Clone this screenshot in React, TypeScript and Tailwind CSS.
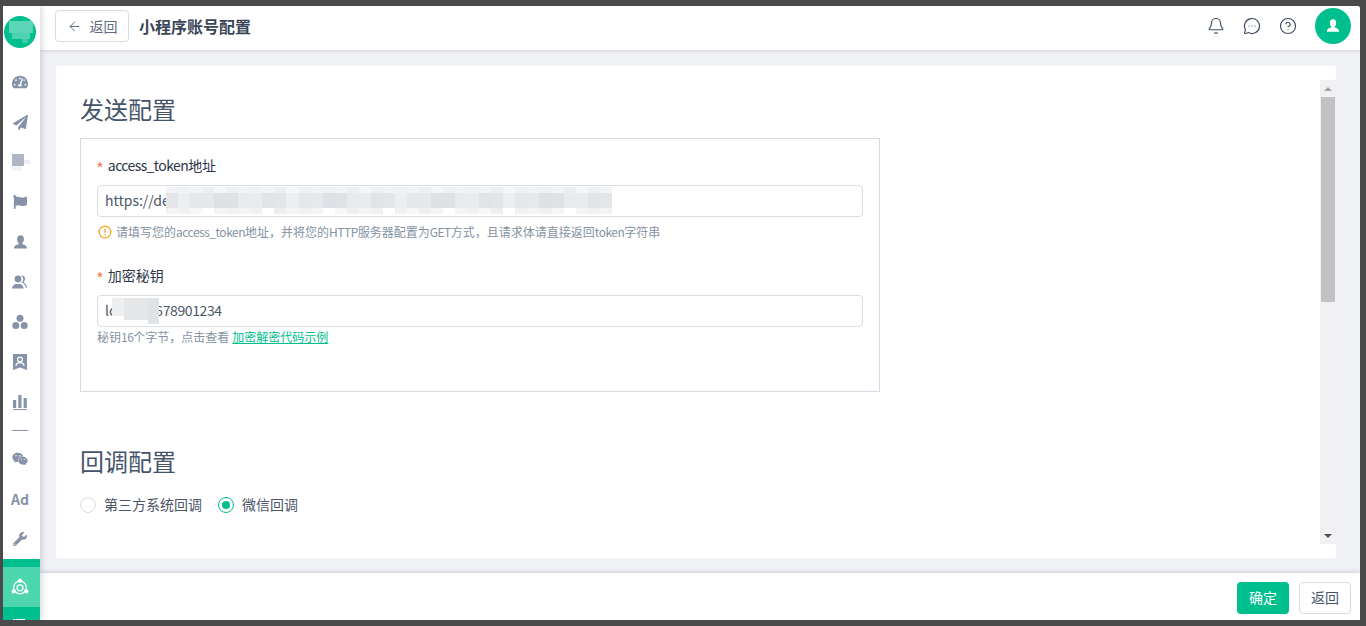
import { ArrowLeft, Bell, CircleHelp, MessageCircleMore } from 'lucide-react';
import { FaFlag, FaPaperPlane, FaTachometerAlt, FaWeixin, FaWrench } from 'react-icons/fa';

const midShades = ['#e3e5e8', '#e9ebed', '#dfe2e5', '#e6e8eb', '#eceeef', '#e1e4e7', '#e8eaec', '#dde0e4', '#e5e7ea'];
const edgeShades = ['#f2f3f4', '#eff0f2', '#f5f6f7', '#edeef0', '#f3f4f5', '#f0f1f3'];
const cells = Array.from({ length: 37 }, (_, i) => i);

function NavRow({ children }: { children: React.ReactNode }) {
  return <div className="flex h-10 items-center justify-center pr-[3px] text-[#8592a8]">{children}</div>;
}

function UserIcon({ size = 16 }: { size?: number }) {
  return (
    <svg width={size} height={size} viewBox="0 0 16 16" fill="currentColor">
      <ellipse cx="8" cy="4.500" rx="3.600" ry="4.300" />
      <path d="M6 8h4v1.800c2.500.8 5 1.500 5 4.700H1c0-3.200 2.500-3.900 5-4.700z" />
    </svg>
  );
}

function UsersIcon() {
  return (
    <svg width="16" height="16" viewBox="0 0 16 16" fill="currentColor">
      <circle cx="6" cy="5" r="3.400" />
      <path d="M0 14.500c0-3 2-4 4-4.600h4c2 .6 3.500 1.600 3.500 4.600z" />
      <path d="M9 1.600c2-.6 4 .8 4 3 0 1.600-.7 2.800-1.600 3.600 1.600.8 3 2.400 3.600 5.600l-1 .5c-.5-3-2-5-4.400-5.800 1-1 1.600-2 1.600-3.500 0-1.200-.8-2.500-2.200-3.400z" />
    </svg>
  );
}

function ClusterIcon() {
  return (
    <svg width="16" height="16" viewBox="0 0 16 16" fill="currentColor">
      <circle cx="8" cy="4.200" r="3.500" />
      <circle cx="3.800" cy="11.400" r="3.500" />
      <circle cx="12.200" cy="11.400" r="3.500" />
    </svg>
  );
}

function BadgeIcon() {
  return (
    <svg width="14" height="16" viewBox="0 0 14 16">
      <path d="M0 0h14v16l-7-2.500L0 16z" fill="currentColor" />
      <circle cx="7" cy="5.500" r="2.400" fill="none" stroke="#fff" strokeWidth="1.200" />
      <path d="M2.800 12c.4-2.400 2-3.400 4.200-3.400s3.800 1 4.200 3.400" fill="none" stroke="#fff" strokeWidth="1.200" />
    </svg>
  );
}

function BarsIcon() {
  return (
    <svg width="14" height="15" viewBox="0 0 14 15" fill="currentColor">
      <rect x="0" y="5" width="3.200" height="8" />
      <rect x="5.300" y="0" width="3.200" height="13" />
      <rect x="10.600" y="3" width="3.200" height="10" />
      <rect x="0" y="14" width="14" height="1" />
    </svg>
  );
}

function ShareCircleIcon() {
  return (
    <svg width="18" height="18" viewBox="0 0 18 18">
      <circle cx="9" cy="9.500" r="6.300" fill="none" stroke="#fff" strokeWidth="1.300" />
      <circle cx="9" cy="9.800" r="3" fill="none" stroke="#fff" strokeWidth="1.300" />
      <circle cx="9" cy="2.600" r="2.100" fill="#fff" />
      <circle cx="2.700" cy="13.400" r="2.100" fill="#fff" />
      <circle cx="15.300" cy="13.400" r="2.100" fill="#fff" />
    </svg>
  );
}

function Sidebar() {
  return (
    <div className="relative z-20 flex w-[37px] shrink-0 flex-col bg-white shadow-[2px_0_6px_rgba(60,70,100,0.2)]">
      <div className="flex h-14 shrink-0 items-center justify-center pb-1 pr-[3px]">
        <div className="relative h-8 w-8 overflow-hidden rounded-full bg-[#00bf8f]">
          <div className="absolute left-[5px] top-[5px] h-[12px] w-[24px] bg-[#5cd6b6]" />
          <div className="absolute left-[8px] top-[17px] h-[6px] w-[18px] bg-[#4ed2ae]" />
          <div className="absolute left-[18px] top-[23px] h-[4px] w-[6px] bg-[#3ccba6]" />
        </div>
      </div>
      <NavRow><FaTachometerAlt size={16} /></NavRow>
      <NavRow><FaPaperPlane size={15} /></NavRow>
      <NavRow>
        <div className="relative h-4 w-4">
          <div className="absolute left-0 top-0 h-3 w-3 bg-[#aeb6c4]" />
          <div className="absolute left-3 top-[6px] h-[4px] w-[6px] bg-[#eceef1]" />
          <div className="absolute left-0 top-3 h-[5px] w-[10px] bg-[#f3f4f6]" />
        </div>
      </NavRow>
      <NavRow><FaFlag size={14} /></NavRow>
      <NavRow><UserIcon size={15} /></NavRow>
      <NavRow><UsersIcon /></NavRow>
      <NavRow><ClusterIcon /></NavRow>
      <NavRow><BadgeIcon /></NavRow>
      <NavRow><BarsIcon /></NavRow>
      <div className="flex h-[17px] items-center justify-center pr-[3px]">
        <div className="h-px w-4 bg-[#8592a8]" />
      </div>
      <NavRow><FaWeixin size={16} /></NavRow>
      <NavRow><span className="pb-px text-[14px] font-bold leading-none">Ad</span></NavRow>
      <NavRow><FaWrench size={14} /></NavRow>
      <div className="flex flex-1 flex-col overflow-hidden bg-[#00bf8f] pt-2">
        <div className="flex h-10 shrink-0 items-center justify-center bg-[#4dd6ae] pr-[3px]">
          <ShareCircleIcon />
        </div>
        <div className="ml-[10px] mt-3 h-px w-3 bg-white" />
      </div>
    </div>
  );
}

function Header() {
  return (
    <div className="relative z-10 flex h-11 shrink-0 items-center justify-between bg-white pb-1 pl-[15px] pr-[9px] shadow-[0_1px_4px_rgba(60,70,100,0.16)]">
      <div className="flex items-center">
        <button className="flex h-8 w-[74px] items-center justify-center gap-2 rounded border border-[#d5dbe3] bg-white text-[14px] text-[#5f6b7e]">
          <ArrowLeft size={15} strokeWidth={1.6} className="text-[#5f6b7e]" />
          返回
        </button>
        <div className="ml-[10px] text-[16px] font-semibold text-[#3a4658]">小程序账号配置</div>
      </div>
      <div className="flex items-center text-[#3f4d63]">
        <Bell size={18} strokeWidth={1.6} />
        <MessageCircleMore size={18} strokeWidth={1.6} className="ml-[18px]" />
        <CircleHelp size={18} strokeWidth={1.6} className="ml-[18px]" />
        <div className="ml-[18px] flex h-9 w-9 items-center justify-center rounded-full bg-[#00bf8f] text-white">
          <UserIcon size={14} />
        </div>
      </div>
    </div>
  );
}

function Scrollbar() {
  return (
    <div className="my-[14px] flex w-4 shrink-0 flex-col items-center bg-[#f1f1f1]">
      <div className="flex h-[17px] w-full shrink-0 items-center justify-center">
        <div className="h-0 w-0 border-x-[4px] border-b-[4px] border-x-transparent border-b-[#a3a3a3]" />
      </div>
      <div className="h-[205px] w-[14px] shrink-0 bg-[#c1c1c1]" />
      <div className="flex-1" />
      <div className="flex h-[17px] w-full shrink-0 items-center justify-center">
        <div className="h-0 w-0 border-x-[4px] border-t-[4px] border-x-transparent border-t-[#505050]" />
      </div>
    </div>
  );
}

function FieldLabel({ children }: { children: React.ReactNode }) {
  return (
    <div className="flex h-5 items-center text-[14px] text-[#2c3648]">
      <span className="mr-[5px] mt-[3px] font-['Liberation_Sans',sans-serif] text-[15px] text-[#f5612f]">*</span>
      <span className="pb-[2px]">{children}</span>
    </div>
  );
}

function SendConfig() {
  return (
    <div className="mt-[13px] h-[254px] w-[800px] border border-[#d5dbe3] px-4 pt-[17px]">
      <FieldLabel><span className="tracking-[-0.6px]">access_token</span>地址</FieldLabel>
      <div className="relative mt-[9px] flex h-8 items-center rounded border border-[#d8dce5] px-[7px] text-[14px] text-[#4a5568]">
        <span className="pb-[2px]">https://de</span>
        {/* blurred part of the address */}
        <div className="absolute left-[68px] top-[1px] flex h-[27px] w-[446px]">
          {cells.map((i) => (
            <div key={i} className="flex h-full flex-1 flex-col">
              <div className="h-[6px]" style={{ backgroundColor: edgeShades[(i * 5) % 6] }} />
              <div className="h-[15px]" style={{ backgroundColor: midShades[(i * 4) % 9] }} />
              <div className="h-[6px]" style={{ backgroundColor: i % 5 === 3 ? '#ffffff' : edgeShades[(i * 7) % 6] }} />
            </div>
          ))}
        </div>
      </div>
      <div className="mt-[6px] flex h-[18px] items-center text-[12px] text-[#8592a3]">
        <svg width="14" height="14" viewBox="0 0 14 14" className="ml-[1px] mr-[4px]" fill="none" stroke="#f5a623" strokeWidth="1.300">
          <circle cx="7" cy="7" r="5.800" />
          <path d="M7 3.500v4.200M7 9.300v1.200" />
        </svg>
        <span>
          请填写您的<span className="tracking-[-0.5px]">access_token</span>地址，并将您的<span className="tracking-[-0.5px]">HTTP</span>服务器配置为<span className="tracking-[-0.5px]">GET</span>方式，且请求体请直接返回<span className="tracking-[-0.5px]">token</span>字符串
        </span>
      </div>
      <div className="mt-[25px]">
        <FieldLabel>加密秘钥</FieldLabel>
      </div>
      <div className="relative mt-[9px] flex h-8 items-center rounded border border-[#d8dce5] px-[7px] text-[14px] text-[#4a5568]">
        <span className="pb-[2px]">
          <span>lc123456</span>
          <span className="tracking-[-0.4px]">78901234</span>
        </span>
        <div className="absolute left-[14px] top-[2px] flex h-[26px] w-[47px]">
          <div className="h-[18px] w-3 bg-[#eceeef]" />
          <div className="h-[22px] w-6 bg-[#e4e6e8]" />
          <div className="h-full w-[11px] bg-[#e0e3e6]" />
        </div>
      </div>
      <div className="mt-px flex h-[18px] items-center text-[12px] text-[#8592a3]">
        <span>秘钥<span className="tracking-[-0.5px]">16</span>个字节，点击查看</span>
        <a className="ml-[3px] text-[#00bf8f] underline">加密解密代码示例</a>
      </div>
    </div>
  );
}

function CallbackConfig() {
  return (
    <div>
      <h2 className="mt-[53px] text-[24px] leading-8 text-[#46546b]">回调配置</h2>
      <div className="mt-[18px] flex h-5 items-center text-[14px] text-[#4a5568]">
        <span className="h-4 w-4 rounded-full border border-[#d8dce5] bg-white" />
        <span className="ml-2 pb-[2px]">第三方系统回调</span>
        <span className="ml-4 flex h-4 w-4 items-center justify-center rounded-full border border-[#00bf8f]">
          <span className="h-2 w-2 rounded-full bg-[#00bf8f]" />
        </span>
        <span className="ml-2 pb-[2px]">微信回调</span>
      </div>
    </div>
  );
}

function Footer() {
  return (
    <div className="relative z-10 flex h-[47px] shrink-0 justify-end gap-[10px] bg-white pr-[9px] pt-[9px] shadow-[0_-1px_4px_rgba(60,70,100,0.22)]">
      <button className="h-8 w-[52px] rounded bg-[#00bf8f] pb-[2px] text-[14px] text-white">确定</button>
      <button className="h-8 w-[52px] rounded border border-[#d5dbe3] bg-white pb-[2px] text-[14px] text-[#46546b]">返回</button>
    </div>
  );
}

export default function App() {
  return (
    <div className="h-[626px] w-[1366px] overflow-hidden bg-[#4a4a4a] pb-[6px] pl-[3px] pr-[6px] pt-[6px] font-['Noto_Sans_CJK_SC',sans-serif]">
      <div className="flex h-full overflow-hidden rounded-tr-[3px] bg-[#f1f2f6]">
        <Sidebar />
        <div className="flex min-w-0 flex-1 flex-col">
          <Header />
          <div className="flex min-h-0 flex-1 pb-[15px] pl-4 pr-6 pt-4">
            <div className="flex min-w-0 flex-1 bg-white">
              <div className="min-w-0 flex-1 overflow-hidden pl-6 pt-[27px]">
                <h2 className="text-[24px] leading-8 text-[#46546b]">发送配置</h2>
                <SendConfig />
                <CallbackConfig />
              </div>
              <Scrollbar />
            </div>
          </div>
          <Footer />
        </div>
      </div>
    </div>
  );
}
